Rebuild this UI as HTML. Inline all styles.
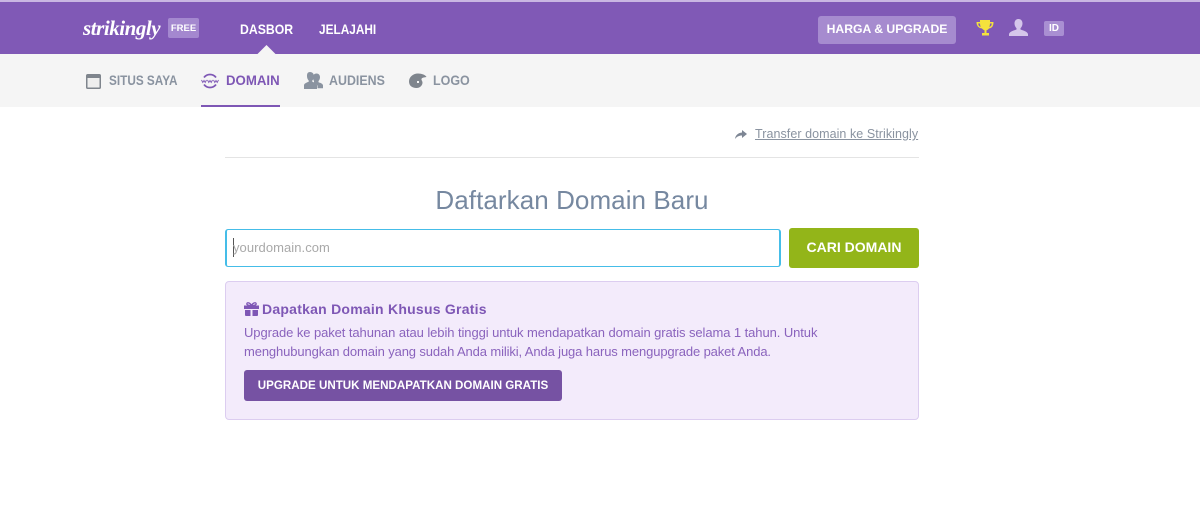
<!DOCTYPE html>
<html><head><meta charset="utf-8"><style>
html,body{margin:0;padding:0;background:#fff;width:1200px;height:526px;overflow:hidden}
body{position:relative;font-family:"Liberation Sans",sans-serif}
.a{position:absolute;white-space:nowrap}
.nav{font-weight:bold;font-size:14px;line-height:16px;color:#fff;transform-origin:0 50%}
.sub{font-weight:bold;font-size:13.5px;line-height:16px;color:#8a93a0;transform-origin:0 50%}
svg{position:absolute;display:block}
</style></head><body>
<div class="a" style="left:0;top:0;width:1200px;height:2px;background:#c9b6e2"></div>
<div class="a" style="left:0;top:2px;width:1200px;height:52px;background:#8059b6"></div>
<div class="a" style="left:0;top:54px;width:1200px;height:53px;background:#f5f5f5"></div>
<div class="a" style="left:83px;top:16px;font-family:'Liberation Serif',serif;font-style:italic;font-weight:bold;font-size:21px;line-height:24px;color:#fff;letter-spacing:-.45px">strikingly</div>
<div class="a" style="left:168px;top:18px;width:31px;height:20px;background:#a488cf;border-radius:2px;color:#fff;font-weight:bold;font-size:9.500px;line-height:22px;text-align:center">FREE</div>
<div class="a nav" style="left:240px;top:21px;transform:scaleX(.875)">DASBOR</div>
<div class="a nav" style="left:319px;top:21px;transform:scaleX(.845)">JELAJAHI</div>
<svg style="left:257px;top:45px" width="20" height="10"><path d="M0 9.5L9.500 0L19 9.500Z" fill="#f5f5f5"/></svg>
<div class="a" style="left:818px;top:16px;width:138px;height:28px;background:#a68bcf;border-radius:3px;color:#fff;font-weight:bold;font-size:12.200px;line-height:26px;text-align:center">HARGA &amp; UPGRADE</div>
<svg style="left:976px;top:19px" width="18" height="18" viewBox="0 0 18 18"><path d="M4 1h10v2h3.500c0 4-1.500 6-4.500 6.500c-.7 1-1.500 1.500-2.500 1.800V14h2.500v2.500h-7V14H8.500v-2.700C7.500 11 6.700 10.500 6 9.500C2.500 9 .5 7 .5 3H4zM2.200 4.500c.2 2 1 3 2.500 3.500C4.300 7 4.100 5.800 4 4.500zM14 4.500c-.1 1.300-.3 2.500-.7 3.500c1.500-.5 2.300-1.500 2.500-3.500z" fill="#f5e23c"/></svg>
<svg style="left:1009px;top:19px" width="19" height="18" viewBox="0 0 19 18"><path d="M9.500 0c2.700 0 4 2 4 4.500c0 2-1 3.800-2 4.700v1.300c2.500 1 6.500 1.700 7.500 4.500v2H0v-2c1-2.800 5-3.500 7.500-4.500V9.200c-1-.9-2-2.700-2-4.700C5.500 2 6.800 0 9.500 0z" fill="#d5c6ea"/></svg>
<div class="a" style="left:1044px;top:21px;width:20px;height:15px;background:#a98fd2;border-radius:2px;color:#fff;font-weight:bold;font-size:10px;line-height:16px;text-align:center">ID</div>

<svg style="left:86px;top:74px" width="15" height="15" viewBox="0 0 15 15"><rect x=".75" y=".75" width="13.500" height="13.500" rx="1" fill="#eee" stroke="#7f858d" stroke-width="1.500"/><rect x="1" y="1" width="13" height="3" fill="#7f858d"/></svg>
<div class="a sub" style="left:109px;top:73px;transform:scaleX(.872)">SITUS SAYA</div>
<svg style="left:201px;top:72px" width="18" height="18" viewBox="0 0 18 18" fill="none" stroke="#7e57b5" stroke-width="1.800"><path d="M3 5.500C6 1.500 12 1.500 15 5.500"/><path d="M3 12.500C6 16.500 12 16.500 15 12.500"/><path d="M.5 8l1.300 2.500 1.200-2 1.200 2L5.500 8M6.500 8l1.300 2.500 1.200-2 1.200 2L11.500 8M12.500 8l1.300 2.500 1.200-2 1.200 2L17.500 8" stroke-width=".9"/></svg>
<div class="a sub" style="left:226px;top:73px;color:#7e57b5;transform:scaleX(.98)">DOMAIN</div>
<div class="a" style="left:201px;top:105px;width:79px;height:2px;background:#7e57b5"></div>
<svg style="left:304px;top:72px" width="19" height="17" viewBox="0 0 19 17"><path d="M12.500 1.500c2.300 0 3.500 1.700 3.500 3.700c0 1.600-.7 3-1.500 3.800v1.200c1.500.6 4 1 4.500 3v3h-5.500v-2c0-1.500-2-2.500-3.500-3.200V9c-.6-.8-1-2.100-1-3.800c0-2 1.200-3.700 3.500-3.700z" fill="#8a93a0"/><path d="M6 0c2.600 0 4 1.900 4 4.200c0 1.800-.8 3.400-1.700 4.300v1.300C10 10.500 12.500 11.200 13 13v4H0v-4c.5-1.800 3-2.500 4.700-3.200V8.500C3.800 7.600 3 6 3 4.200 3 1.900 3.400 0 6 0z" fill="#8a93a0"/></svg>
<div class="a sub" style="left:329px;top:73px;transform:scaleX(.92)">AUDIENS</div>
<svg style="left:409px;top:73px" width="18" height="16" viewBox="0 0 18 16"><path d="M9 .5c4 0 7.500 1.500 8.500 3.500c-1.500.500-4.500.2-5 2c-.3 1.200 1 2 1 3.500c0 3-2.500 5.500-6 5.500C3 15 0 12.500 0 8.500C0 4 4 .5 9 .5z" fill="#7f858d"/><rect x="8" y="8" width="2" height="2" fill="#f5f5f5"/></svg>
<div class="a sub" style="left:433px;top:73px;transform:scaleX(.925)">LOGO</div>

<svg style="left:735px;top:130px" width="12" height="9" viewBox="0 0 12 9"><path d="M7 0l5 4-5 4V5.500C4 5.500 2 6.500 0 9c.5-4 3-6 7-6.500z" fill="#7d8694"/></svg>
<div class="a" style="left:755px;top:126px;font-size:12.500px;line-height:16px;color:#8a93a0;text-decoration:underline;letter-spacing:.06px">Transfer domain ke Strikingly</div>
<div class="a" style="left:225px;top:157px;width:694px;height:1px;background:#e4e4e4"></div>

<div class="a" style="left:225px;top:184px;width:694px;text-align:center;font-size:26px;line-height:32px;color:#7688a0;letter-spacing:.07px">Daftarkan Domain Baru</div>

<div class="a" style="left:225px;top:229px;width:552px;height:36px;border:2px solid #45bde8;border-width:1px 2px;border-radius:3px;background:#fff"></div>
<div class="a" style="left:233px;top:238px;width:1px;height:19px;background:#555"></div>
<div class="a" style="left:233px;top:239px;font-size:13px;line-height:18px;color:#a9a9a9;letter-spacing:.06px">yourdomain.com</div>
<div class="a" style="left:789px;top:228px;width:130px;height:40px;background:#93b519;border-radius:3px;color:#fff;font-weight:bold;font-size:14px;line-height:39px;text-align:center">CARI DOMAIN</div>

<div class="a" style="left:225px;top:281px;width:692px;height:137px;background:#f3ebfb;border:1px solid #dccdf0;border-radius:4px"></div>
<svg style="left:244px;top:302px" width="15" height="14" viewBox="0 0 15 14"><path d="M0 3.500h15V7H0zM1 8h5.500v6H2a1 1 0 0 1-1-1zM8.500 8H14v5a1 1 0 0 1-1 1H8.500zM6.500 3.500h2V7h-2z" fill="#7e57b5"/><path d="M7.500 3.500C6 .5 3 0 2.800 1.800 2.700 3 5 3.500 7.500 3.500c2.500 0 4.800-.5 4.700-1.700C12 0 9 .5 7.500 3.500z" fill="none" stroke="#7e57b5" stroke-width="1.300"/></svg>
<div class="a" style="left:262px;top:300px;font-weight:bold;font-size:14px;line-height:18px;color:#7e57b5;letter-spacing:.24px">Dapatkan Domain Khusus Gratis</div>
<div class="a" style="left:244px;top:323px;font-size:13px;line-height:19px;color:#8a63bd;letter-spacing:-.08px">Upgrade ke paket tahunan atau lebih tinggi untuk mendapatkan domain gratis selama 1 tahun. Untuk<br><span style="letter-spacing:-.12px">menghubungkan domain yang sudah Anda miliki, Anda juga harus mengupgrade paket Anda.</span></div>
<div class="a" style="left:244px;top:370px;width:318px;height:31px;background:#7652a3;border-radius:3px;color:#fff;font-weight:bold;font-size:11.600px;line-height:31px;text-align:center">UPGRADE UNTUK MENDAPATKAN DOMAIN GRATIS</div>
</body></html>
